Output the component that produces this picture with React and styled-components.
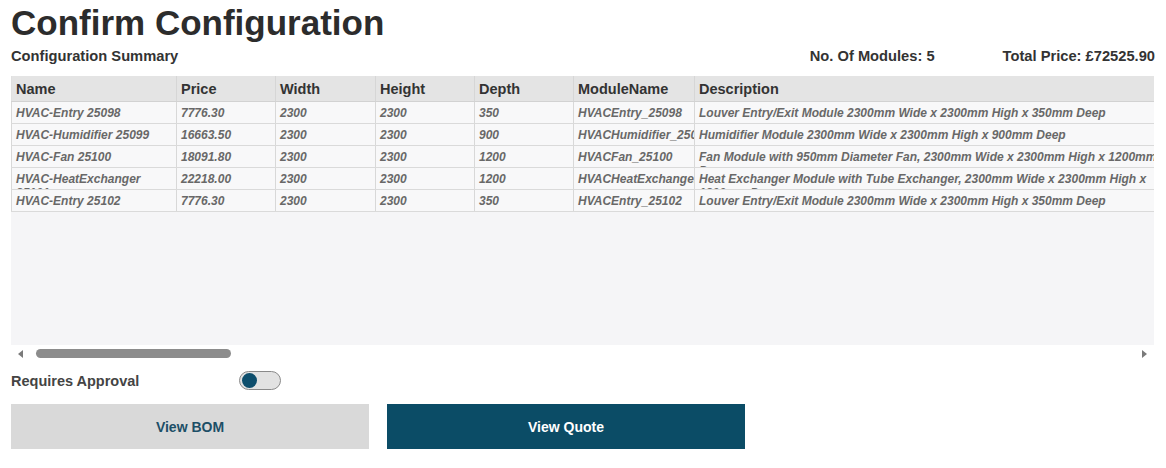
import React, { useState } from 'react';
import styled, { createGlobalStyle } from 'styled-components';

const GlobalStyle = createGlobalStyle`
    body {
        margin: 0;
        background: #ffffff;
        font-family: "Liberation Sans", Arial, sans-serif;
    }
`;

const columns = [
    { key: 'name', title: 'Name', width: 165 },
    { key: 'price', title: 'Price', width: 99 },
    { key: 'width', title: 'Width', width: 100 },
    { key: 'height', title: 'Height', width: 99 },
    { key: 'depth', title: 'Depth', width: 99 },
    { key: 'module', title: 'ModuleName', width: 121 },
    { key: 'description', title: 'Description', width: 482 },
];

const modules = [
    { name: 'HVAC-Entry 25098', price: '7776.30', width: '2300', height: '2300', depth: '350', module: 'HVACEntry_25098', description: 'Louver Entry/Exit Module 2300mm Wide x 2300mm High x 350mm Deep' },
    { name: 'HVAC-Humidifier 25099', price: '16663.50', width: '2300', height: '2300', depth: '900', module: 'HVACHumidifier_25099', description: 'Humidifier Module 2300mm Wide x 2300mm High x 900mm Deep' },
    { name: 'HVAC-Fan 25100', price: '18091.80', width: '2300', height: '2300', depth: '1200', module: 'HVACFan_25100', description: 'Fan Module with 950mm Diameter Fan, 2300mm Wide x 2300mm High x 1200mm Deep' },
    { name: 'HVAC-HeatExchanger 25101', price: '22218.00', width: '2300', height: '2300', depth: '1200', module: 'HVACHeatExchanger_25101', description: 'Heat Exchanger Module with Tube Exchanger, 2300mm Wide x 2300mm High x 1200mm Deep' },
    { name: 'HVAC-Entry 25102', price: '7776.30', width: '2300', height: '2300', depth: '350', module: 'HVACEntry_25102', description: 'Louver Entry/Exit Module 2300mm Wide x 2300mm High x 350mm Deep' },
];

const gridColumns = columns.map(c => `${c.width}px`).join(' ');

export default function App() {
    const [approval, setApproval] = useState(false);

    return (
        <>
            <GlobalStyle />
            <Page>
                <Title>Confirm Configuration</Title>
                <SummaryBar>
                    <SummaryLabel>Configuration Summary</SummaryLabel>
                    <Totals>
                        <SummaryLabel>No. Of Modules: 5</SummaryLabel>
                        <SummaryLabel>Total Price: £72525.90</SummaryLabel>
                    </Totals>
                </SummaryBar>

                <TableViewport>
                    <Grid>
                        <Row $header>
                            {columns.map(c => (
                                <HeadCell key={c.key}>{c.title}</HeadCell>
                            ))}
                        </Row>
                        {modules.map(m => (
                            <Row key={m.name}>
                                {columns.map(c => (
                                    <Cell key={c.key}>{m[c.key]}</Cell>
                                ))}
                            </Row>
                        ))}
                    </Grid>
                </TableViewport>

                <ScrollBar>
                    <Arrow $dir="left" />
                    <Track>
                        <Thumb />
                    </Track>
                    <Arrow $dir="right" />
                </ScrollBar>

                <ApprovalRow>
                    <ApprovalLabel>Requires Approval</ApprovalLabel>
                    <Toggle type="button" $on={approval} onClick={() => setApproval(!approval)}>
                        <Knob $on={approval} />
                    </Toggle>
                </ApprovalRow>

                <Actions>
                    <ActionButton>View BOM</ActionButton>
                    <ActionButton $primary>View Quote</ActionButton>
                </Actions>
            </Page>
        </>
    );
}

const Page = styled.div`
    padding: 0 11px 0 11px;
    width: 1144px;
`;

const Title = styled.h1`
    margin: 0;
    padding-top: 3px;
    font-size: 35px;
    line-height: 40px;
    font-weight: 700;
    color: #2c2c2c;
`;

const SummaryBar = styled.div`
    display: flex;
    justify-content: space-between;
    align-items: center;
    height: 26px;
`;

const Totals = styled.div`
    display: flex;
    gap: 68px;
`;

const SummaryLabel = styled.span`
    font-size: 14.7px;
    font-weight: 700;
    color: #333333;
`;

const TableViewport = styled.div`
    margin-top: 7px;
    height: 269px;
    width: 1143px;
    overflow: hidden;
    background: #f5f5f7;
`;

const Grid = styled.div`
    display: grid;
    width: max-content;
`;

const Row = styled.div`
    display: grid;
    grid-template-columns: ${gridColumns};
    height: ${p => (p.$header ? '26px' : '22px')};
    background: ${p => (p.$header ? '#e4e4e4' : '#f8f8f9')};
    border-bottom: 1px solid ${p => (p.$header ? '#d2d2d2' : '#dadada')};
    box-sizing: border-box;
`;

const HeadCell = styled.div`
    padding: 0 4px;
    display: flex;
    align-items: center;
    font-size: 14.5px;
    font-weight: 700;
    color: #333333;
    border-left: 1px solid #d6d6d6;
    white-space: nowrap;
    overflow: hidden;
    &:first-child { border-left: 1px solid #e0e0e0; }
`;

const Cell = styled.div`
    padding: 4px 4px 0;
    font-size: 12px;
    line-height: 14px;
    font-weight: 700;
    font-style: italic;
    color: #686868;
    border-left: 1px solid #d8d8d8;
    overflow: hidden;
    box-sizing: border-box;
`;

const ScrollBar = styled.div`
    display: flex;
    align-items: center;
    height: 17px;
    gap: 6px;
    padding: 0 8px 0 7px;
`;

const Arrow = styled.div`
    width: 0;
    height: 0;
    border-top: 4px solid transparent;
    border-bottom: 4px solid transparent;
    ${p => (p.$dir === 'left'
        ? 'border-right: 5px solid #7a7a7a;'
        : 'border-left: 5px solid #7a7a7a;')}
`;

const Track = styled.div`
    flex: 1;
    height: 9px;
    display: flex;
`;

const Thumb = styled.div`
    width: 195px;
    height: 9px;
    margin-left: 7px;
    border-radius: 5px;
    background: #8c8c8c;
`;

const ApprovalRow = styled.div`
    display: flex;
    align-items: center;
    height: 29px;
    margin-top: 4px;
`;

const ApprovalLabel = styled.span`
    width: 228px;
    font-size: 14.5px;
    font-weight: 700;
    color: #444444;
`;

const Toggle = styled.button`
    width: 42px;
    height: 19px;
    padding: 0 2px;
    border: 1px solid #8a8a8a;
    border-radius: 10px;
    background: #e2e2e2;
    display: flex;
    align-items: center;
    justify-content: ${p => (p.$on ? 'flex-end' : 'flex-start')};
    cursor: pointer;
    box-sizing: border-box;
`;

const Knob = styled.span`
    width: 15px;
    height: 15px;
    border-radius: 50%;
    background: #0e4f6d;
`;

const Actions = styled.div`
    display: flex;
    gap: 18px;
    margin-top: 9px;
`;

const ActionButton = styled.button`
    width: 358px;
    height: 45px;
    border: 0;
    background: ${p => (p.$primary ? '#0b4c66' : '#d9d9d9')};
    color: ${p => (p.$primary ? '#ffffff' : '#1d4f67')};
    font-family: "Liberation Sans", Arial, sans-serif;
    font-size: 14px;
    font-weight: 700;
    cursor: pointer;
`;
